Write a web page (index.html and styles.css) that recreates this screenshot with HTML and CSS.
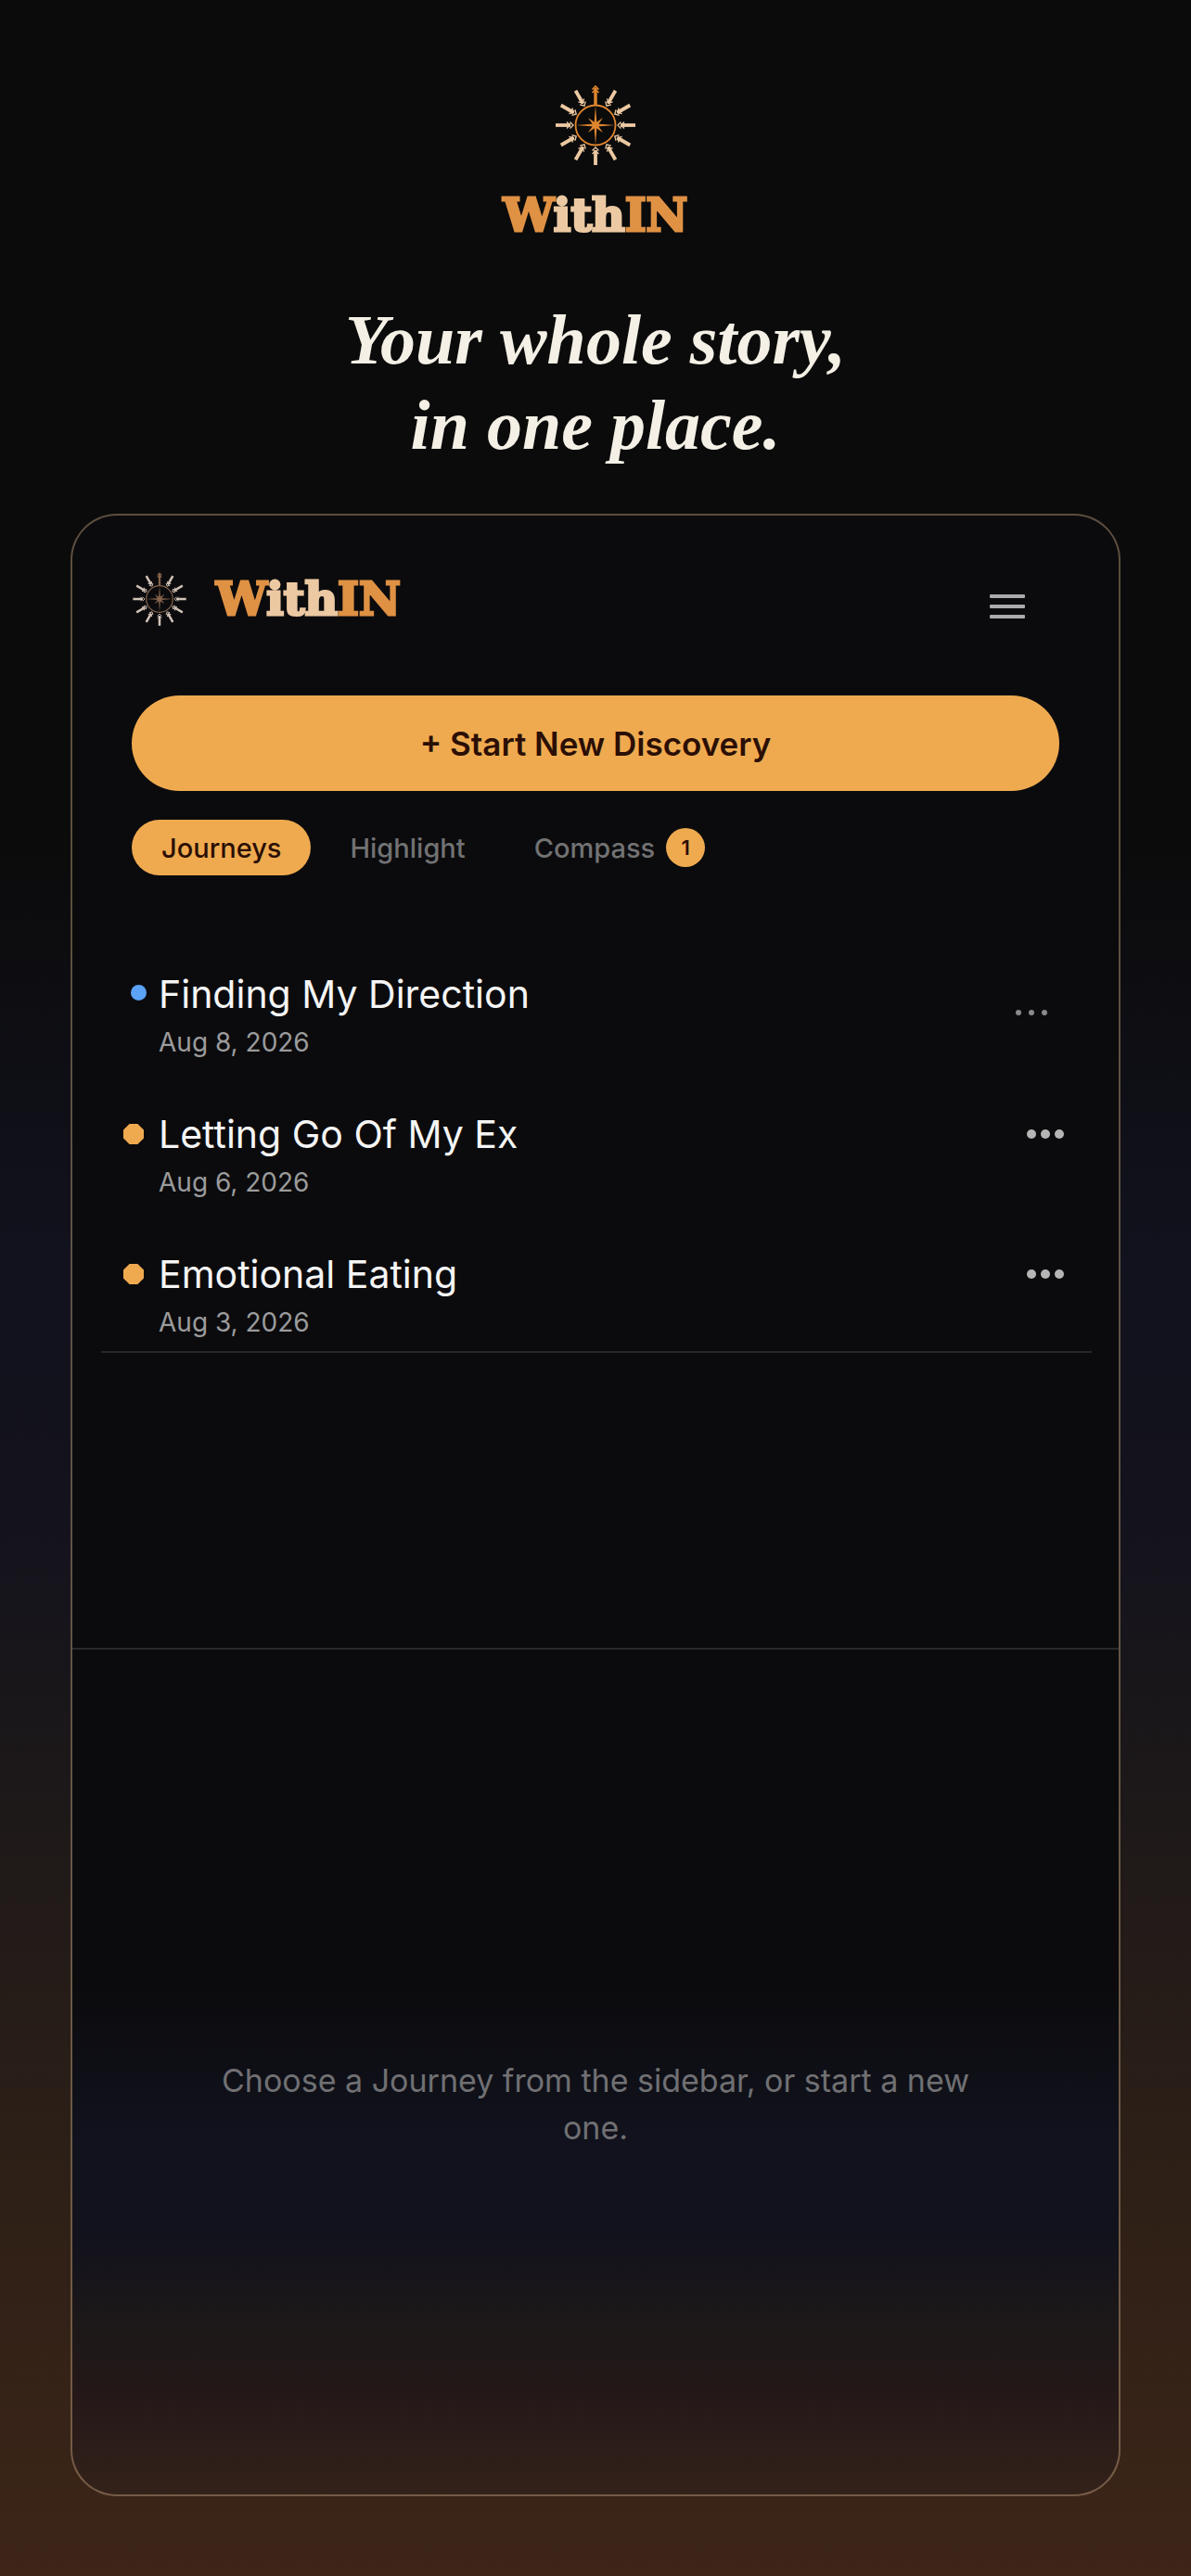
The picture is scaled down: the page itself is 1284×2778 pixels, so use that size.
FILE: index.html
```html
<!DOCTYPE html>
<html lang="en">
<head>
<meta charset="utf-8">
<meta name="viewport" content="width=device-width, initial-scale=1">
<title>WithIN</title>
<link rel="stylesheet" href="styles.css">
</head>
<body>
<svg class="defs" aria-hidden="true">
  <defs>
    <g id="arrow-in">
      <path d="M0-43V-27" stroke-width="3.800"/>
      <path d="M-3.500-31L0-27.500L3.500-31M-3.500-27.500L0-24L3.500-27.500" stroke-width="1.300"/>
    </g>
    <symbol id="compass" viewBox="-45 -45 90 90">
      <g class="compass-arrows" fill="none">
        <use href="#arrow-in" transform="rotate(30)"/>
        <use href="#arrow-in" transform="rotate(60)"/>
        <use href="#arrow-in" transform="rotate(90)"/>
        <use href="#arrow-in" transform="rotate(120)"/>
        <use href="#arrow-in" transform="rotate(150)"/>
        <use href="#arrow-in" transform="rotate(180)"/>
        <use href="#arrow-in" transform="rotate(210)"/>
        <use href="#arrow-in" transform="rotate(240)"/>
        <use href="#arrow-in" transform="rotate(270)"/>
        <use href="#arrow-in" transform="rotate(300)"/>
        <use href="#arrow-in" transform="rotate(330)"/>
      </g>
      <g class="compass-ring" fill="none">
        <circle r="21.500" stroke-width="1.800"/>
        <path d="M0-22V-40" stroke-width="3.400"/>
        <path d="M-3.500-38.500L0-42L3.500-38.500M-3.500-35L0-38.500L3.500-35" stroke-width="1.600"/>
      </g>
      <g class="compass-star">
        <path d="M0-21L1.500-1.500L21 0L1.500 1.500L0 21L-1.500 1.500L-21 0L-1.500-1.500Z"/>
        <path d="M8-8L2.500 0L8 8L0 2.500L-8 8L-2.500 0L-8-8L0-2.500Z"/>
      </g>
    </symbol>
  </defs>
</svg>

<header class="hero">
  <svg class="hero-mark" aria-hidden="true"><use href="#compass"/></svg>
  <p class="wordmark">W<span>ith</span>IN</p>
  <h1>Your whole story,<br>in one place.</h1>
</header>

<div class="card">
  <section class="sidebar">
    <div class="topbar">
      <a class="brand" href="#">
        <svg class="brand-mark" aria-hidden="true"><use href="#compass"/></svg>
        <span class="wordmark">W<span>ith</span>IN</span>
      </a>
      <button class="menu" type="button" aria-label="Menu"><i></i><i></i><i></i></button>
    </div>
    <button class="start" type="button">+ Start New Discovery</button>
    <nav class="tabs">
      <button class="tab active" type="button">Journeys</button>
      <button class="tab" type="button">Highlight</button>
      <button class="tab" type="button">Compass <span class="badge">1</span></button>
    </nav>
    <ul class="journeys">
      <li class="new">
        <span class="dot"></span>
        <div class="info"><h2>Finding My Direction</h2><p>Aug 8, 2026</p></div>
        <button class="more" type="button" aria-label="More options"><i></i><i></i><i></i></button>
      </li>
      <li>
        <span class="dot"></span>
        <div class="info"><h2>Letting Go Of My Ex</h2><p>Aug 6, 2026</p></div>
        <button class="more" type="button" aria-label="More options"><i></i><i></i><i></i></button>
      </li>
      <li>
        <span class="dot"></span>
        <div class="info"><h2>Emotional Eating</h2><p>Aug 3, 2026</p></div>
        <button class="more" type="button" aria-label="More options"><i></i><i></i><i></i></button>
      </li>
    </ul>
  </section>
  <main class="empty">
    <p>Choose a Journey from the sidebar, or start a new one.</p>
  </main>
</div>
</body>
</html>
```
FILE: styles.css
```css
* { box-sizing: border-box; }

body {
  margin: 0;
  min-height: 100vh;
  display: flex;
  flex-direction: column;
  padding: 90px 76px 86px;
  background: linear-gradient(#0b0b0b 0%, #0b0b0b 32%, #11121d 49%, #13121d 58%, #1c1819 69%, #2e2017 85%, #3d2518 100%);
  color: #f5f5f5;
  font-family: Inter, "Liberation Sans", sans-serif;
}

h1, h2, p, ul { margin: 0; padding: 0; }
ul { list-style: none; }

button {
  border: 0;
  padding: 0;
  background: none;
  color: inherit;
  font: inherit;
}

.defs { position: absolute; width: 0; height: 0; }

.compass-arrows { stroke: var(--arrows, #ecc9a2); }
.compass-ring { stroke: var(--ring, #e0862f); }
.compass-star { fill: var(--ring, #e0862f); }

.wordmark {
  color: #df9144;
  font: 900 49px/60px "DejaVu Serif", serif;
  -webkit-text-stroke: 3px currentColor;
}
.wordmark span { color: #ecc9a2; }

.hero {
  display: flex;
  flex-direction: column;
  align-items: center;
  text-align: center;
}
.hero-mark { width: 90px; height: 90px; }
.hero .wordmark { margin-top: 22px; }

h1 {
  margin-top: 58px;
  color: #f4f0e6;
  font: italic 700 76px/92px "Liberation Serif", serif;
}

.card {
  flex: 1;
  display: flex;
  flex-direction: column;
  margin-top: 50px;
  border: 2px solid rgba(190, 160, 125, 0.45);
  border-radius: 50px;
  overflow: hidden;
  background: linear-gradient(#0b0b0d 0%, #0b0b0d 74%, #11121d 82%, #12121d 87%, #1c1819 91%, #241818 95%, #33221a 100%) padding-box;
}

.sidebar {
  padding: 60px 29px 318px 31px;
  border-bottom: 2px solid #29292b;
}

.topbar {
  display: flex;
  justify-content: space-between;
  align-items: center;
  padding: 0 72px 0 33px;
}
.brand {
  display: flex;
  align-items: center;
  gap: 31px;
  text-decoration: none;
}
.brand-mark {
  --arrows: #d3c4b8;
  --ring: #86644c;
  width: 60px;
  height: 60px;
}
.menu {
  display: flex;
  flex-direction: column;
  gap: 7px;
  margin-top: 15px;
}
.menu i { width: 38px; height: 4px; background: #aaaaab; border-radius: 1px; }

.start {
  display: block;
  width: calc(100% - 68px);
  height: 103px;
  margin: 74px 0 0 33px;
  border-radius: 52px;
  background: #efaa50;
  color: #2b0f05;
  font-size: 35px;
  font-weight: 600;
}

.tabs {
  display: flex;
  align-items: center;
  margin: 31px 33px 0;
  gap: 10px;
}
.tab {
  display: flex;
  align-items: center;
  gap: 12px;
  height: 60px;
  padding: 0 32px;
  border-radius: 30px;
  color: #727273;
  font-size: 29px;
  font-weight: 500;
}
.tab.active { background: #efaa50; color: #2b0f05; }
.badge {
  width: 42px;
  height: 42px;
  border-radius: 50%;
  background: #efaa50;
  color: #2b0f05;
  font-size: 22px;
  font-weight: 600;
  line-height: 42px;
  text-align: center;
}

.journeys {
  display: flex;
  flex-direction: column;
  gap: 47px;
  margin-top: 102px;
  padding-bottom: 5px;
  border-bottom: 2px solid #272729;
}
.journeys li {
  display: flex;
  padding: 0 30px 0 24px;
}
.dot {
  width: 22px;
  height: 22px;
  margin: 15px 16px 0 0;
  background: #efaa50;
  clip-path: polygon(30% 0, 70% 0, 100% 30%, 100% 70%, 70% 100%, 30% 100%, 0 70%, 0 30%);
}
.info { flex: 1; }
.info h2 { font-size: 41px; font-weight: 400; line-height: 52px; }
.info p { color: #9b9b9c; font-size: 28px; line-height: 52px; }
.more {
  display: flex;
  gap: 5px;
  align-self: flex-start;
  margin-top: 21px;
}
.more i { width: 10px; height: 10px; border-radius: 50%; background: #b5b5b6; }

.new .dot {
  width: 17px;
  height: 17px;
  margin: 16px 13px 0 8px;
  border-radius: 50%;
  background: #5ba3f7;
  clip-path: none;
}
.new .more { gap: 8px; margin: 43px 18px 0 0; }
.new .more i { width: 6px; height: 6px; background: #8a8a8b; }

.empty {
  flex: 1;
  display: flex;
  align-items: center;
  justify-content: center;
  padding: 69px 140px 0;
}
.empty p {
  max-width: 830px;
  color: #707073;
  font-size: 34px;
  line-height: 51px;
  text-align: center;
}
```
